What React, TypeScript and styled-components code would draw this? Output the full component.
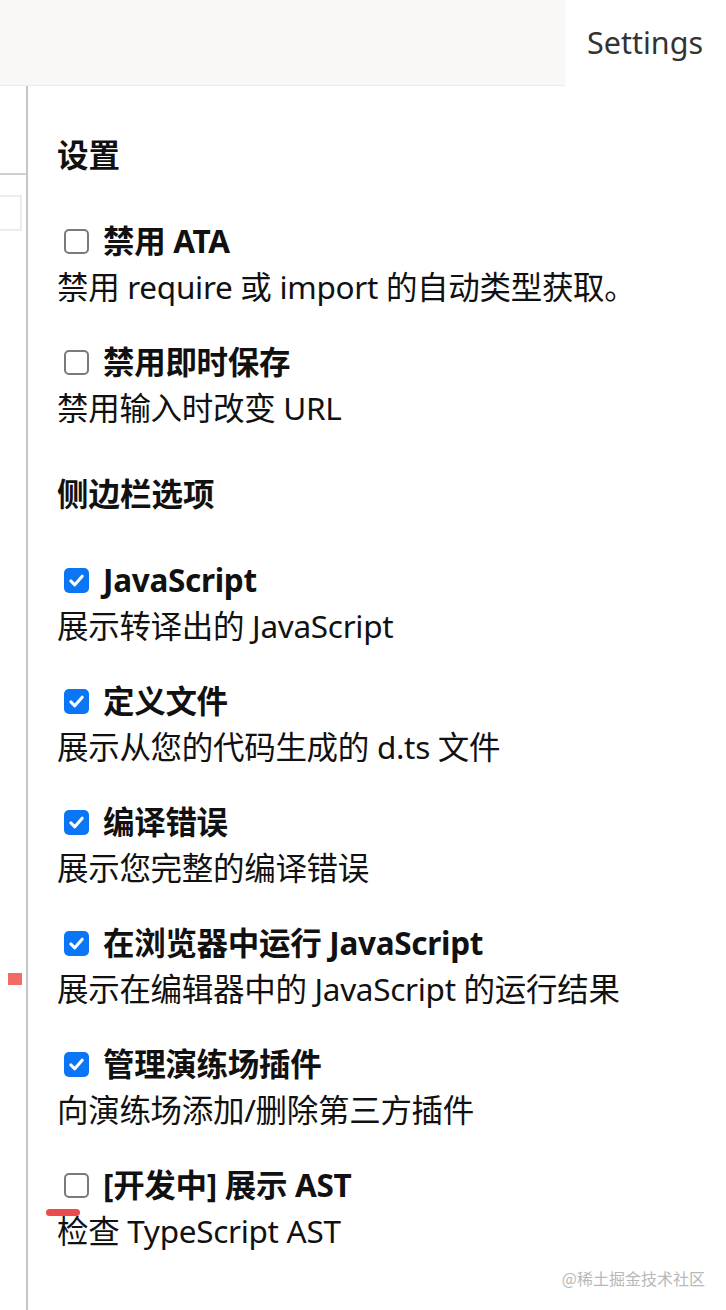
import React from "react";
import styled, { createGlobalStyle } from "styled-components";

const Global = createGlobalStyle`
  html, body { margin: 0; padding: 0; background: #fff; }
  body { font-family: "Noto Sans", "Noto Sans CJK SC", sans-serif; color: #111; }
  * { box-sizing: border-box; }
`;

const Page = styled.div`
  width: 726px;
  height: 1310px;
  display: flex;
  flex-direction: column;
  position: relative;
  overflow: hidden;
`;

const TopBar = styled.div`
  height: 86px;
  display: flex;
`;

const TopFiller = styled.div`
  flex: 1;
  background: #f9f8f7;
  border-bottom: 1px solid #ebeae8;
`;

const Tab = styled.div`
  width: 161px;
  display: flex;
  align-items: center;
  padding-left: 22px;
  padding-bottom: 2px;
  font-size: 30.5px;
  color: #333;
  background: #fff;
`;

const Body = styled.div`
  flex: 1;
  display: flex;
`;

const LeftPane = styled.div`
  width: 28px;
  border-right: 2px solid #c6c6c6;
  display: flex;
  flex-direction: column;
`;

const LeftHeader = styled.div`
  height: 89px;
  border-bottom: 2px solid #cfcfcf;
`;

const LeftInput = styled.div`
  margin-top: 20px;
  width: 22px;
  height: 36px;
  border: 2px solid #ececec;
  border-left: none;
`;

const Marker = styled.div`
  margin-top: 742px;
  margin-left: 8px;
  width: 14px;
  height: 12px;
  background: #f36b66;
`;

const Content = styled.div`
  flex: 1;
  padding: 46px 0 0 29px;
  display: flex;
  flex-direction: column;
`;

const Heading = styled.h4<{ $first?: boolean }>`
  margin: ${(p) => (p.$first ? "0" : "11px")} 0 40px;
  font-size: 31.5px;
  line-height: 46px;
  font-weight: 700;
  color: #111;
`;

const Item = styled.div`
  margin-bottom: 29px;
  display: flex;
  flex-direction: column;
`;

const Label = styled.label`
  display: flex;
  align-items: center;
  gap: 14px;
  padding-left: 7px;
  font-size: 31.5px;
  line-height: 46px;
  font-weight: 700;
  color: #111;
  letter-spacing: -0.3px;
`;

const Box = styled.span<{ $checked: boolean }>`
  width: 25px;
  height: 25px;
  border-radius: 5px;
  display: inline-flex;
  align-items: center;
  justify-content: center;
  flex-shrink: 0;
  background: ${(p) => (p.$checked ? "#0a75f5" : "#fff")};
  border: ${(p) => (p.$checked ? "none" : "2px solid #7a7a7a")};
`;

const Desc = styled.div`
  font-size: 31.5px;
  line-height: 46px;
  color: #111;
  letter-spacing: -0.3px;
`;

const Underline = styled.div`
  position: absolute;
  left: 46px;
  top: 1209px;
  width: 34px;
  height: 7px;
  border-radius: 4px;
  background: #ec4b4b;
`;

const Watermark = styled.div`
  position: absolute;
  right: 21px;
  bottom: 20px;
  font-size: 16px;
  color: #b8b8b8;
  font-family: "Noto Sans CJK SC", sans-serif;
`;

const Check = ({ checked }: { checked: boolean }) => (
  <Box $checked={checked}>
    {checked && (
      <svg width="19" height="19" viewBox="0 0 20 20">
        <path d="M4 10.5 L8.2 14.5 L16 5.5" fill="none" stroke="#fff" strokeWidth="3.2" strokeLinecap="round" strokeLinejoin="round" />
      </svg>
    )}
  </Box>
);

const general = [
  { label: "禁用 ATA", desc: "禁用 require 或 import 的自动类型获取。", checked: false },
  { label: "禁用即时保存", desc: "禁用输入时改变 URL", checked: false },
];

const sidebar = [
  { label: "JavaScript", desc: "展示转译出的 JavaScript", checked: true },
  { label: "定义文件", desc: "展示从您的代码生成的 d.ts 文件", checked: true },
  { label: "编译错误", desc: "展示您完整的编译错误", checked: true },
  { label: "在浏览器中运行 JavaScript", desc: "展示在编辑器中的 JavaScript 的运行结果", checked: true },
  { label: "管理演练场插件", desc: "向演练场添加/删除第三方插件", checked: true },
  { label: "[开发中] 展示 AST", desc: "检查 TypeScript AST", checked: false },
];

export default function App() {
  return (
    <Page>
      <Global />
      <TopBar>
        <TopFiller />
        <Tab>Settings</Tab>
      </TopBar>
      <Body>
        <LeftPane>
          <LeftHeader />
          <LeftInput />
          <Marker />
        </LeftPane>
        <Content>
          <Heading $first>设置</Heading>
          {general.map((it) => (
            <Item key={it.label}>
              <Label>
                <Check checked={it.checked} />
                {it.label}
              </Label>
              <Desc>{it.desc}</Desc>
            </Item>
          ))}
          <Heading>侧边栏选项</Heading>
          {sidebar.map((it) => (
            <Item key={it.label}>
              <Label>
                <Check checked={it.checked} />
                {it.label}
              </Label>
              <Desc>{it.desc}</Desc>
            </Item>
          ))}
        </Content>
      </Body>
      <Underline />
      <Watermark>@稀土掘金技术社区</Watermark>
    </Page>
  );
}
